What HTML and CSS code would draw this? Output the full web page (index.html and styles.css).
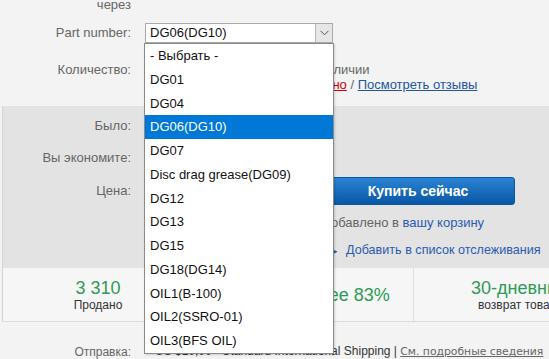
FILE: index.html
```html
<!DOCTYPE html>
<html lang="ru">
<head>
    <meta charset="UTF-8">
    <title>Товар</title>
    <link rel="stylesheet" href="styles.css">
</head>
<body>
    <div class="page">
        <div class="row row-via">
            <div class="label">через</div>
            <div class="value"></div>
        </div>

        <div class="row row-part">
            <div class="label">Part number:</div>
            <div class="value">
                <div class="select">
                    <span class="select-text">DG06(DG10)</span>
                    <span class="select-arrow">
                        <svg width="9" height="6" viewBox="0 0 9 6"><polyline points="0.5,0.8 4.5,4.8 8.5,0.8" fill="none" stroke="#555" stroke-width="1"/></svg>
                    </span>
                    <ul class="options">
                        <li>- Выбрать -</li>
                        <li>DG01</li>
                        <li>DG04</li>
                        <li class="selected">DG06(DG10)</li>
                        <li>DG07</li>
                        <li>Disc drag grease(DG09)</li>
                        <li>DG12</li>
                        <li>DG13</li>
                        <li>DG15</li>
                        <li>DG18(DG14)</li>
                        <li>OIL1(B-100)</li>
                        <li>OIL2(SSRO-01)</li>
                        <li>OIL3(BFS OIL)</li>
                    </ul>
                </div>
            </div>
        </div>

        <div class="row row-qty">
            <div class="label">Количество:</div>
            <div class="value">
                <div class="qty-line"><span class="qty-box">1</span> шт. — есть в наличии</div>
                <div class="qty-line"><span class="qty-pad"></span><a href="#" class="red">Ещё не оценено</a> / <a href="#" class="link">Посмотреть отзывы</a></div>
            </div>
        </div>

        <div class="panel">
            <div class="row prow-was">
                <div class="label">Было:</div>
                <div class="value"><s>US $1,48 / шт.</s></div>
            </div>
            <div class="row prow-save">
                <div class="label">Вы экономите:</div>
                <div class="value">US $0,22</div>
            </div>
            <div class="row prow-price">
                <div class="label">Цена:</div>
                <div class="value price-value">
                    <span class="price">US $1,26 / шт.</span>
                    <button class="buy">Купить сейчас</button>
                </div>
            </div>
            <div class="row prow-added">
                <div class="label"></div>
                <div class="value"><span class="note-pad"></span>Добавлено в <a href="#" class="plain">вашу корзину</a></div>
            </div>
            <div class="row prow-watch">
                <div class="label"></div>
                <div class="value"><span class="note-pad"></span><span class="bullet">&#9656;</span><a href="#" class="plain">Добавить в список отслеживания</a></div>
            </div>
        </div>

        <div class="stats">
            <div class="stat">
                <div class="stat-big">3 310</div>
                <div class="stat-small">Продано</div>
            </div>
            <div class="stat stat-rate">
                <div class="stat-big">Довольны более 83%</div>
            </div>
            <div class="stat">
                <div class="stat-big">30-дневный</div>
                <div class="stat-small">возврат товара</div>
            </div>
        </div>

        <div class="row row-ship">
            <div class="label">Отправка:</div>
            <div class="value ship">US $10,00 - Standard International Shipping | <a href="#" class="details">См. подробные сведения</a></div>
        </div>
    </div>
</body>
</html>
```

FILE: styles.css
```css
body {
    margin: 0;
    overflow: hidden;
    background-color: #f3f3f3;
}
.page {
    width: 640px;
    margin-top: -3px;
    font-family: "Liberation Sans", Arial, sans-serif;
    font-size: 13px;
    line-height: 16px;
    color: #666;
}
a {
    text-decoration: none;
}
.row {
    display: grid;
    grid-template-columns: 131px 1fr;
    column-gap: 14px;
    align-items: center;
}
.label {
    text-align: right;
}
.row-via {
    height: 16px;
}
.row-part {
    margin-top: 10px;
    height: 20px;
}
.select {
    position: relative;
    width: 186px;
    height: 18px;
    border: 1px solid #a9a9a9;
    background-color: white;
    display: flex;
    align-items: center;
}
.select-text {
    flex: 1;
    padding-left: 4px;
    color: #111;
}
.select-arrow {
    width: 16px;
    height: 18px;
    background-color: #e6e6e6;
    border-left: 1px solid #b8b8b8;
    display: flex;
    align-items: center;
    justify-content: center;
}
.options {
    position: absolute;
    top: 19px;
    left: -2px;
    width: 188px;
    margin: 0;
    padding: 0;
    list-style: none;
    background-color: white;
    border: 1px solid #8a8a8a;
    box-shadow: 1px 1px 2px rgba(0,0,0,0.15);
    z-index: 10;
}
.options li {
    height: 23.75px;
    line-height: 23.75px;
    padding-left: 5px;
    color: #111;
    white-space: nowrap;
}
.options li.selected {
    background-color: #0078d7;
    color: white;
}
.row-qty {
    margin-top: 19px;
    align-items: start;
    line-height: 15px;
}
.qty-line {
    white-space: nowrap;
}
.qty-box {
    display: inline-block;
    width: 85px;
    margin-right: 6px;
}
.qty-pad {
    display: inline-block;
    width: 103px;
}
.red {
    color: #cc0000;
    text-decoration: underline;
}
.link {
    color: #2255a4;
    text-decoration: underline;
}
.plain {
    color: #2a5bb0;
}
.panel {
    margin-top: 14px;
    margin-left: 2px;
    padding: 12px 0 10px;
    background-color: #e3e3e3;
    border-left: 1px solid #d4d4d4;
}
.panel .row {
    grid-template-columns: 128px 1fr;
    height: 16px;
}
.prow-save {
    margin-top: 16px;
}
.prow-price {
    margin-top: 11px;
    height: 28px !important;
}
.price-value {
    display: flex;
    align-items: center;
}
.price {
    width: 176px;
    color: #333;
}
.buy {
    width: 194px;
    height: 28px;
    border: 1px solid #0b579f;
    border-radius: 3px;
    background: linear-gradient(#2a83d4, #0a57a6);
    color: white;
    font-family: "Liberation Sans", Arial, sans-serif;
    font-size: 14px;
    font-weight: bold;
}
.prow-added {
    margin-top: 10px;
}
.prow-watch {
    margin-top: 11px;
    font-size: 12.6px;
}
.note-pad {
    display: inline-block;
    width: 177px;
}
.bullet {
    display: inline-block;
    width: 13px;
    margin-left: 11px;
    color: #2a5bb0;
    font-size: 9px;
}
.stats {
    margin-left: 2px;
    display: grid;
    grid-template-columns: 191px 220px 214px;
    height: 53px;
    background-color: #f6f6f6;
    border-left: 1px solid #d4d4d4;
    border-bottom: 1px solid #dcdcdc;
}
.stat {
    display: flex;
    flex-direction: column;
    align-items: center;
    justify-content: center;
    border-right: 1px solid #dedede;
}
.stat-rate {
    padding-right: 8px;
}
.stat-big {
    font-size: 18px;
    line-height: 20px;
    color: #2f9a57;
    white-space: nowrap;
}
.stat-small {
    font-size: 12px;
    line-height: 14px;
    color: #333;
    white-space: nowrap;
}
.row-ship {
    margin-top: 21px;
    font-size: 12px;
}
.ship {
    padding-left: 10px;
    color: #333;
    white-space: nowrap;
}
.details {
    font-family: "DejaVu Sans", Verdana, sans-serif;
    font-size: 10.8px;
    color: #666;
    text-decoration: underline;
}
```
